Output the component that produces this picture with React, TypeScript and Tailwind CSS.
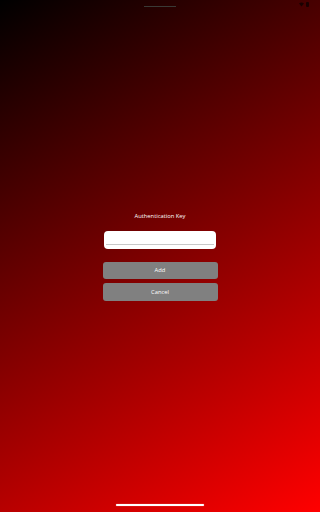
export default function App() {
  return (
    <div className="relative h-[512px] w-[320px] overflow-hidden bg-[linear-gradient(148deg,#000000,#ff0000)] font-['Open_Sans','Liberation_Sans',sans-serif]">
      {/* status bar overlay */}
      <div className="absolute left-[144px] top-[6px] h-px w-[32px] bg-[#3a3a36]" />
      <div className="absolute right-[11px] top-[2px] flex items-center gap-[2px]">
        <svg width="5" height="5" viewBox="0 0 10 10">
          <path d="M0 3 Q5 -1 10 3 L5 9 Z" fill="#1a0000" />
        </svg>
        <div className="h-[5px] w-[3px] rounded-[1px] bg-[#1a0000]" />
      </div>

      <div className="flex h-full w-full flex-col items-center justify-center pt-[1px]">
        <div className="flex w-[115px] flex-col items-center">
          <div className="text-[5.8px] font-medium leading-[8px] text-white">Authentication Key</div>
          <div className="mt-[11px] flex h-[18px] w-[112px] flex-col rounded-[4px] bg-white px-[2px]">
            <div className="h-[14px] border-b border-[#c8c8c8]" />
          </div>
          <button className="mt-[13px] flex h-[17px] w-[115px] items-center justify-center rounded-[3px] bg-[#808080] text-[5.8px] font-medium text-white">
            Add
          </button>
          <button className="mt-[4px] flex h-[18px] w-[115px] items-center justify-center rounded-[3px] bg-[#808080] text-[5.8px] font-medium text-white">
            Cancel
          </button>
        </div>
      </div>

      {/* home indicator */}
      <div className="absolute bottom-[6px] left-[116px] h-[2px] w-[88px] rounded-full bg-white shadow-[0_0_1px_#ffb0b0]" />
    </div>
  );
}
